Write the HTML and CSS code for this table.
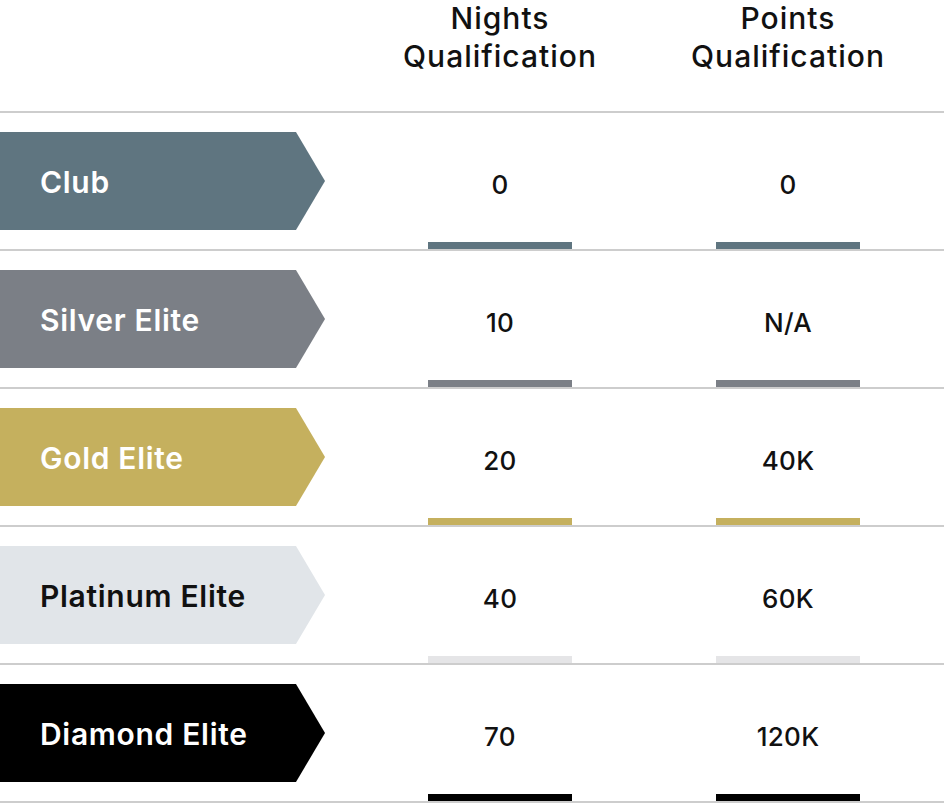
FILE: index.html
```html
<!DOCTYPE html>
<html lang="en">
<head>
<meta charset="utf-8">
<title>Elite Status Qualification</title>
<link rel="stylesheet" href="styles.css">
</head>
<body>
<div class="table">
  <div class="head">
    <div class="head-cell"></div>
    <div class="head-cell">Nights<br>Qualification</div>
    <div class="head-cell">Points<br>Qualification</div>
  </div>

  <div class="row tier-club">
    <div class="label-cell"><div class="arrow">Club</div></div>
    <div class="val-cell"><div class="val">0</div><div class="bar"></div></div>
    <div class="val-cell"><div class="val">0</div><div class="bar"></div></div>
  </div>

  <div class="row tier-silver">
    <div class="label-cell"><div class="arrow">Silver Elite</div></div>
    <div class="val-cell"><div class="val">10</div><div class="bar"></div></div>
    <div class="val-cell"><div class="val">N/A</div><div class="bar"></div></div>
  </div>

  <div class="row tier-gold">
    <div class="label-cell"><div class="arrow">Gold Elite</div></div>
    <div class="val-cell"><div class="val">20</div><div class="bar"></div></div>
    <div class="val-cell"><div class="val">40K</div><div class="bar"></div></div>
  </div>

  <div class="row tier-platinum">
    <div class="label-cell"><div class="arrow">Platinum Elite</div></div>
    <div class="val-cell"><div class="val">40</div><div class="bar"></div></div>
    <div class="val-cell"><div class="val">60K</div><div class="bar"></div></div>
  </div>

  <div class="row tier-diamond">
    <div class="label-cell"><div class="arrow">Diamond Elite</div></div>
    <div class="val-cell"><div class="val">70</div><div class="bar"></div></div>
    <div class="val-cell"><div class="val">120K</div><div class="bar"></div></div>
  </div>
</div>
</body>
</html>
```

FILE: styles.css
```css
html, body {
  margin: 0;
  padding: 0;
  background: #ffffff;
}

body {
  font-family: Inter, "Open Sans", "Liberation Sans", sans-serif;
  color: #111111;
  width: 944px;
  overflow: hidden;
}

.head,
.row {
  display: grid;
  grid-template-columns: 356px 288px 288px 12px;
  border-bottom: 2px solid #cdcdcd;
}

.head {
  height: 111px;
}

.head-cell {
  text-align: center;
  font-size: 30px;
  font-weight: 500;
  line-height: 38px;
  letter-spacing: 1px;
  margin-top: -1px;
}

.row {
  height: 136px;
}

.label-cell {
  padding-top: 19px;
}

.arrow {
  width: 325px;
  height: 98px;
  box-sizing: border-box;
  padding-left: 40px;
  padding-top: 1px;
  display: flex;
  align-items: center;
  font-size: 30px;
  font-weight: 600;
  letter-spacing: 0.7px;
  color: #ffffff;
  clip-path: polygon(0 0, 296px 0, 325px 50%, 296px 100%, 0 100%);
}

.val-cell {
  display: flex;
  flex-direction: column;
  align-items: center;
}

.val {
  margin-top: 19px;
  height: 98px;
  box-sizing: border-box;
  padding-top: 6px;
  display: flex;
  align-items: center;
  font-size: 26px;
  font-weight: 500;
  letter-spacing: 0.3px;
}

.bar {
  margin-top: auto;
  width: 144px;
  height: 7px;
}

.tier-club .arrow, .tier-club .bar { background: #5f7580; }
.tier-silver .arrow, .tier-silver .bar { background: #7b7f86; }
.tier-gold .arrow, .tier-gold .bar { background: #c5b05e; }
.tier-platinum .arrow { background: #e1e5e9; color: #111111; }
.tier-platinum .bar { background: #e5e5e7; }
.tier-diamond .arrow, .tier-diamond .bar { background: #000000; }
```
